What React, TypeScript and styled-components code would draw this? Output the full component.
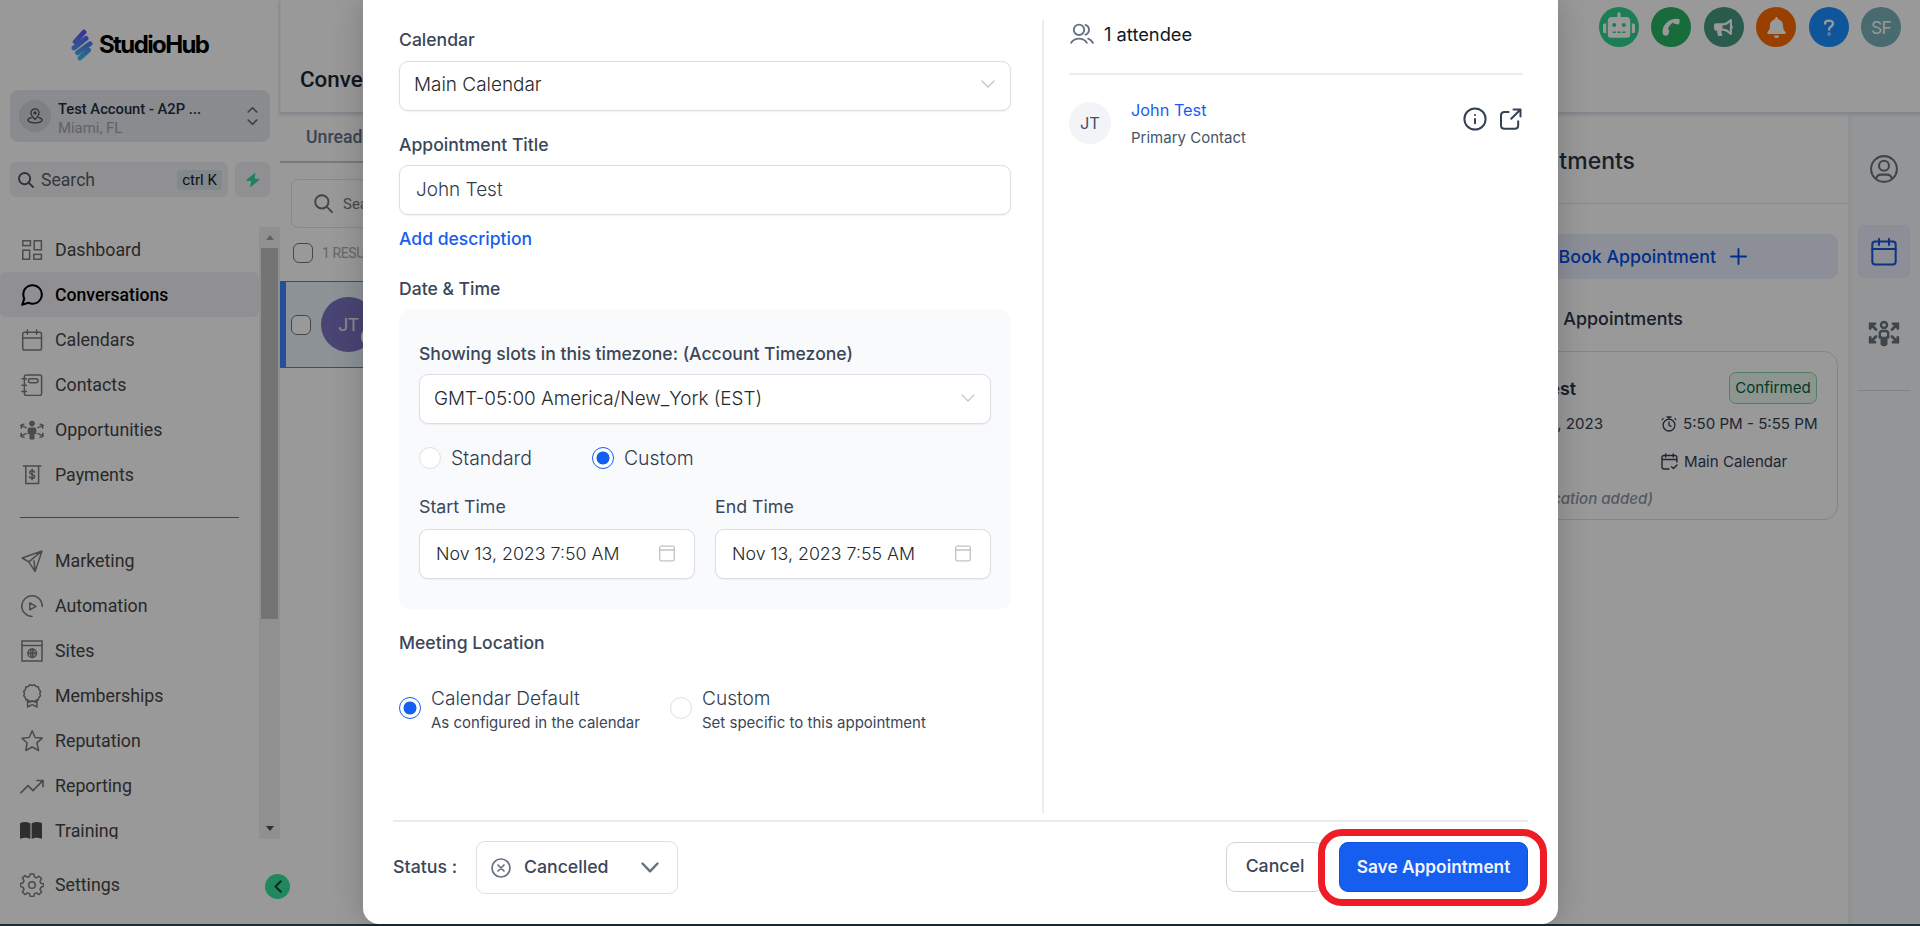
import React from 'react';
import styled, { createGlobalStyle, css } from 'styled-components';
import { FaRobot, FaBell, FaBullhorn } from 'react-icons/fa';
import { FaBookOpen } from 'react-icons/fa6';

const GlobalStyle = createGlobalStyle`
  *, *::before, *::after { box-sizing: border-box; }
  html, body { margin: 0; padding: 0; }
  body { width: 1920px; height: 926px; overflow: hidden; background: #fff; font-family: Inter, "Liberation Sans", sans-serif; }
`;

/* ---------- icons ---------- */

type IconProps = {
  w?: number;
  h?: number;
  box?: string;
  stroke?: string;
  sw?: number;
  children: React.ReactNode;
};

const IconSvg = styled.svg`
  flex: none;
  display: block;
`;

const Icon = ({ w = 22, h, box = '0 0 22 22', stroke = 'currentColor', sw = 1.5, children }: IconProps) => (
  <IconSvg
    width={w}
    height={h ?? w}
    viewBox={box}
    fill="none"
    stroke={stroke}
    strokeWidth={sw}
    strokeLinecap="round"
    strokeLinejoin="round"
  >
    {children}
  </IconSvg>
);

const DashboardIcon = () => (
  <Icon>
    <g strokeLinejoin="miter">
      <rect x="1.8" y="1.8" width="7.600" height="4.800" />
      <rect x="13.200" y="1.800" width="7.200" height="9" />
      <rect x="1.800" y="11.200" width="6.800" height="9" />
      <rect x="12.800" y="15.400" width="7.600" height="4.800" />
    </g>
  </Icon>
);
const ChatIcon = () => (
  <Icon box="1.9 1.9 20.2 20.2" sw={1.9}>
    <path d="M21 11.5a8.38 8.38 0 0 1-.9 3.8 8.5 8.5 0 0 1-7.6 4.7 8.38 8.38 0 0 1-3.8-.9L3 21l1.9-5.7a8.38 8.38 0 0 1-.9-3.8 8.5 8.5 0 0 1 4.7-7.6 8.38 8.38 0 0 1 3.8-.9h.5a8.48 8.48 0 0 1 8 8v.5z" />
  </Icon>
);
const CalendarIcon = () => (
  <Icon>
    <rect x="1.700" y="3.200" width="18.800" height="17.800" rx="1.800" />
    <path d="M1.700 9h18.800M6.400 0.900v4.400M15.600 0.900v4.400" />
  </Icon>
);
const ContactsIcon = () => (
  <Icon>
    <rect x="3.400" y="1" width="17.200" height="20.400" rx="1.800" />
    <rect x="7.400" y="4.800" width="9.600" height="4" rx="2" />
    <path d="M1 4.800h4.400M1 11.200h4.400M1 17.600h4.400" />
  </Icon>
);
const OpportunitiesIcon = () => (
  <Icon w={24} h={22} box="-1 0 24 22">
    <circle cx="11" cy="4.600" r="2.800" fill="currentColor" stroke="none" />
    <path d="M8.300 8.400h5.400a1.600 1.600 0 0 1 1.600 1.600v5h-1.800v4.400a1 1 0 0 1-1 1h-3a1 1 0 0 1-1-1V15H6.700v-5a1.600 1.600 0 0 1 1.600-1.600z" fill="currentColor" stroke="none" />
    <path d="M5 8.600L0 6.600M.4 9.200L0 6.200 2.800 5.200M17 8.600l5-2M21.600 9.200l.4-3-2.800-1M5 14.600L0 17M.2 14.200L0 17.400 3 18.400M17 14.600l5 2.400M21.800 14.200l.2 3.200-3 1" />
  </Icon>
);
const PaymentsIcon = () => (
  <Icon>
    <path d="M2.600 1.900h17M4.800 1.900v17.700h12.800V1.900" strokeLinecap="square" strokeLinejoin="miter" />
    <path d="M13.600 8.200c-.3-1-1.200-1.500-2.500-1.500-1.400 0-2.400.7-2.400 1.900 0 2.600 4.900 1.300 4.900 3.900 0 1.200-1 1.900-2.500 1.900-1.400 0-2.300-.6-2.600-1.600M11.100 5.200v10.600" />
  </Icon>
);
const MarketingIcon = () => (
  <Icon>
    <path d="M21 1L1.200 8l6.600 3.900L14 21.400 21 1zM21 1L7.800 11.900M14 21.400l-1-10.600" />
  </Icon>
);
const AutomationIcon = () => (
  <Icon>
    <path d="M21.300 11.500A10.300 10.300 0 1 0 11 21.400" />
    <path d="M8.800 7.800v7l6.200-3.500z" />
  </Icon>
);
const SitesIcon = () => (
  <Icon>
    <g strokeLinejoin="miter">
      <rect x="1" y="1" width="20" height="20" />
      <path d="M1 5.400h20" />
      <circle cx="11.200" cy="13.200" r="4.300" />
      <path d="M11.200 8.900v8.600M6.900 13.200h8.600" />
      <ellipse cx="11.200" cy="13.200" rx="2" ry="4.300" strokeWidth="1" />
    </g>
  </Icon>
);
const BadgeIcon = () => (
  <Icon h={24} box="0 -1 22 24">
    <path d="M11.200.5l2.400-.7 1.600 1.800 2.300.5.400 2.400 1.700 1.800-.8 2.200.7 2.300-1.700 1.700-.5 2.300-2.400.4-1.700 1.600-2-.8-2.200.8-1.700-1.600-2.400-.4-.5-2.300-1.700-1.700.8-2.300-.8-2.200 1.800-1.800.3-2.400 2.400-.5L8.900-.2z" />
    <path d="M6.600 15v7l4.600-2.400 4.800 2.400v-7M6.600 17.500l4.600-1.500 4.800 1.500" />
  </Icon>
);
const StarIcon = () => (
  <Icon>
    <path d="M11.200.8l2.900 6.700 7.100.6-5.300 4.800 1.700 7.600-6.400-3.500-6.400 3.500 1.300-7.500L1 8.200l7.200-.7z" />
  </Icon>
);
const TrendIcon = () => (
  <Icon w={24} h={22} box="-1 0 24 22" sw={1.7}>
    <path d="M0 17.600l7-7 5 5L21.500 5.800M16 5.500h6v6" strokeLinejoin="miter" />
  </Icon>
);
const GearIcon = () => (
  <Icon w={24} box="0 0 24 24">
    <circle cx="12" cy="12" r="3.300" />
    <path d="M10.200 1h3.600l.7 3 1.900.8 2.700-1.600 2.500 2.500-1.600 2.700.8 1.900 3 .7v2l-3 1.500-.8 1.900 1.600 2.600-2.500 2.500-2.700-1.600-1.900.8-.7 2.700h-3.600l-.7-2.700-1.900-.8-2.700 1.600-2.500-2.500 1.600-2.700-.8-1.900-2.700-.8v-3.100l2.700-.8.800-1.900-1.600-2.700 2.500-2.500 2.700 1.600 1.900-.8z" />
  </Icon>
);
const SearchIcon = ({ size, sw }: { size: number; sw: number }) => (
  <Icon w={size} box="0 0 16 16" sw={sw}>
    <circle cx="6.600" cy="6.600" r="5.600" />
    <path d="M10.800 10.800L15.200 15.200" />
  </Icon>
);
const ChevronDown = ({ w, sw }: { w: number; sw: number }) => (
  <Icon w={w} h={w / 2 + 1} box="0 0 14 8" sw={sw}>
    <path d="M1 1l6 6 6-6" />
  </Icon>
);
const DateIcon = () => (
  <Icon w={16} h={17} box="0 0 16 17" sw={1.3}>
    <rect x=".7" y="1.200" width="14.600" height="14.600" rx="1.500" />
    <path d="M.7 5h14.600" />
  </Icon>
);

/* ---------- page shell ---------- */

const Page = styled.div`
  width: 1920px;
  height: 926px;
  display: flex;
  position: relative;
  overflow: hidden;
`;

const Sidebar = styled.aside`
  width: 280px;
  height: 924px;
  flex: none;
  display: flex;
  flex-direction: column;
  font-family: Roboto, "Liberation Sans", sans-serif;
  position: relative;
`;

const Logo = styled.div`
  display: flex;
  align-items: center;
  height: 32px;
  margin: 29px 0 0 71px;
  gap: 6px;
  font: 700 24px/32px Inter, sans-serif;
  letter-spacing: -1.6px;
  color: #000;
`;
const LogoMark = styled.svg`
  flex: none;
`;

const Account = styled.div`
  display: flex;
  align-items: center;
  margin: 29px 10px 0;
  height: 52px;
  padding: 0 12px 0 9px;
  border-radius: 8px;
  background: #e4e8ed;
`;
const AccountPin = styled.div`
  width: 32px;
  height: 32px;
  border-radius: 50%;
  background: #d2d5d8;
  display: flex;
  align-items: center;
  justify-content: center;
  color: #4c4f55;
`;
const AccountText = styled.div`
  flex: 1;
  padding: 5px 0 0 7px;
  font-size: 14.9px;
  line-height: 19px;
  color: #a1a3aa;
  white-space: nowrap;
  b { display: block; font-weight: 500; font-size: 14.75px; color: #26303f; }
`;

const SearchRow = styled.div`
  display: flex;
  gap: 7px;
  height: 35px;
  margin: 20px 10px 0;
`;
const QuickSearch = styled.div`
  width: 218px;
  display: flex;
  align-items: center;
  border-radius: 6px;
  background: #f1f1f4;
  padding: 0 6px 0 8px;
  font-size: 17.6px;
  color: #5a5d63;
  svg { color: #4f5560; }
  span { flex: 1; padding-left: 7px; }
  kbd {
    font: 400 15px/20px Roboto, sans-serif;
    width: 45px;
    text-align: center;
    border-radius: 3px;
    background: #dae3e7;
    color: #14181d;
  }
`;
const Bolt = styled.div`
  width: 35px;
  display: flex;
  align-items: center;
  justify-content: center;
  border-radius: 6px;
  background: #f1f1f4;
`;

const NavArea = styled.div`
  display: flex;
  height: 612px;
  margin-top: 30px;
  overflow: hidden;
`;
const NavList = styled.nav`
  width: 259px;
  flex: none;
`;
const NavItem = styled.div<{ $active?: boolean }>`
  height: 45px;
  display: flex;
  align-items: center;
  font-size: 17.8px;
  font-weight: 400;
  color: #454545;
  border-radius: 6px;
  svg { color: #7d7d7d; }
  ${(p) => p.$active && css`
    background: #f0f1f4;
    color: #000;
    font-size: 17.6px;
    font-weight: 500;
    svg { color: #000; }
  `}
`;
const NavIcon = styled.span<{ $solid?: boolean }>`
  width: 55px;
  padding-right: ${(p) => (p.$solid ? 13 : 11)}px;
  padding-left: 20px;
  display: flex;
  justify-content: center;
  ${(p) => p.$solid && css`svg { color: #4e4e4e; }`}
`;
const NavDivider = styled.div`
  height: 1px;
  margin: 20px;
  background: #6d7280;
`;
const Scrollbar = styled.div`
  width: 21px;
  display: flex;
  flex-direction: column;
  align-items: center;
  justify-content: space-between;
  background: #f1f1f1;
`;
const ScrollArrow = styled.div<{ $down?: boolean }>`
  height: 21px;
  display: flex;
  align-items: center;
  &::before {
    content: '';
    border: 4.5px solid transparent;
    border-top-width: ${(p) => (p.$down ? 5 : 0)}px;
    border-bottom-width: ${(p) => (p.$down ? 0 : 5)}px;
    border-top-color: ${(p) => (p.$down ? '#505050' : 'transparent')};
    border-bottom-color: ${(p) => (p.$down ? 'transparent' : '#a3a3a3')};
  }
`;
const Thumb = styled.div`
  width: 17px;
  height: 371px;
  margin-bottom: auto;
  background: #c1c1c1;
`;
const SettingsRow = styled(NavItem)`
  margin-top: 23px;
`;
const Collapse = styled.div`
  position: absolute;
  left: 265px;
  top: 874px;
  width: 25px;
  height: 25px;
  border-radius: 50%;
  background: #35e39f;
  display: flex;
  align-items: center;
  justify-content: center;
  z-index: 2;
  color: #0e4a36;
`;

const Main = styled.main`
  flex: 1;
  height: 924px;
  display: flex;
  flex-direction: column;
`;
const TopBar = styled.header`
  height: 112px;
  flex: none;
  display: flex;
  justify-content: space-between;
  padding: 0 19px;
  border-left: 1px solid #f1f3f6;
  box-shadow: 0 2px 3px 1px #d9dfe6;
  z-index: 1;
`;
const PageTitle = styled.h1`
  margin: 64px 0 0;
  font: 500 22.4px/30px Roboto, sans-serif;
  color: #1b2636;
`;
const TopActions = styled.div`
  display: flex;
  gap: 12.4px;
  padding-top: 7px;
`;
const RoundAction = styled.div<{ $bg: string; $lift?: number }>`
  width: 40px;
  height: 40px;
  border-radius: 50%;
  background: ${(p) => p.$bg};
  color: #fff;
  display: flex;
  align-items: center;
  justify-content: center;
  padding-bottom: ${(p) => p.$lift ?? 0}px;
  font: 400 17.5px Inter, sans-serif;
  letter-spacing: -0.8px;
`;
const Body = styled.div`
  flex: 1;
  display: flex;
  justify-content: space-between;
`;

/* ---------- conversation list ---------- */

const Inbox = styled.section`
  width: 420px;
  font-family: Roboto, "Liberation Sans", sans-serif;
`;
const InboxTab = styled.div`
  height: 51px;
  padding: 0 26px;
  border-bottom: 2px solid #c6cad6;
  font: 500 17.7px/51px Roboto, sans-serif;
  color: #65728a;
`;
const InboxSearch = styled.div`
  margin: 16px 11px 0;
  height: 49px;
  display: flex;
  align-items: center;
  gap: 10px;
  padding-left: 22px;
  border: 1.5px solid #dfe1e6;
  border-radius: 7px;
  font-size: 15px;
  color: #747980;
  svg { color: #68757d; }
`;
const ResultRow = styled.div`
  height: 53px;
  display: flex;
  align-items: center;
  gap: 9px;
  padding: 0 13px 3px;
  font-size: 14px;
  letter-spacing: -0.4px;
  color: #a9adb5;
`;
const CheckBox = styled.span`
  width: 20px;
  height: 20px;
  flex: none;
  border: 1.3px solid #70757e;
  border-radius: 6px;
  background: #fff;
`;
const Conversation = styled.div`
  height: 87px;
  display: flex;
  align-items: center;
  gap: 10px;
  padding-left: 5px;
  border: 1px solid #3f86ff;
  border-left: 6px solid #3f86ff;
  background: #e9f3fb;
`;
const Initials = styled.div`
  width: 55px;
  height: 55px;
  border-radius: 50%;
  background: #7974c2;
  color: #e8e8ef;
  font-size: 18px;
  line-height: 56px;
  text-align: center;
  position: relative;
  &::after {
    content: '';
    position: absolute;
    left: 40px;
    top: 29px;
    width: 22px;
    height: 22px;
    border-radius: 50%;
    background: #fff;
  }
`;

/* ---------- appointments panel ---------- */

const RightSide = styled.div`
  display: flex;
`;
const Panel = styled.section`
  width: 420px;
  color: #344054;
`;
const PanelTitle = styled.h2`
  margin: 0;
  height: 92px;
  padding: 4px 213px 0 0;
  text-align: right;
  font: 500 23px/90px Inter, sans-serif;
  color: #2a3446;
  border-bottom: 1px solid #e4e6e9;
`;
const BookButton = styled.div`
  margin: 30px 10px 0 20px;
  height: 45px;
  padding-right: 91px;
  display: flex;
  align-items: center;
  justify-content: flex-end;
  gap: 14px;
  border-radius: 9px;
  background: #eaeefc;
  color: #004eeb;
  font-size: 17.8px;
  font-weight: 500;
`;
const SectionTitle = styled.h3`
  margin: 0;
  padding-right: 165px;
  text-align: right;
  height: 72px;
  font: 500 17.9px/80px Inter, sans-serif;
  color: #2a3446;
`;
const Card = styled.div`
  margin: 0 10px 0 20px;
  height: 169px;
  padding: 19px 20px 0;
  border: 1px solid #dcdee1;
  border-radius: 14px;
  font-size: 15.1px;
`;
const CardRow = styled.div<{ $h: number }>`
  height: ${(p) => p.$h}px;
  display: flex;
  align-items: center;
  justify-content: flex-end;
  > :first-child { flex: 1; text-align: right; }
`;
const CardName = styled.span`
  font: 600 17.7px Inter, sans-serif;
  padding-right: 153px;
  color: #2a3446;
`;
const Confirmed = styled.span`
  width: 88px;
  height: 32px;
  border: 1px solid #88d6a8;
  border-radius: 7px;
  background: #ecf8f1;
  color: #05603a;
  line-height: 29px;
  text-align: center;
  font-size: 15.1px;
`;
const CardMeta = styled.span`
  width: 156px;
  display: flex;
  align-items: center;
  gap: 6px;
  white-space: nowrap;
`;
const CardDate = styled.span`
  padding-right: 58px;
`;
const CardNote = styled.div`
  font-style: italic;
  font-size: 15.1px;
  font-weight: 500;
  color: #8f95a3;
  text-align: right;
  padding-right: 164px;
  line-height: 36px;
`;
const Rail = styled.aside`
  width: 72px;
  display: flex;
  flex-direction: column;
  align-items: center;
  background: #f7f9fc;
  box-shadow: inset 3px 2px 5px #edeff1;
  color: #68757d;
  padding-top: 43px;
`;
const RailActive = styled.div`
  width: 52px;
  height: 53px;
  margin: 42px 0 41px;
  border-radius: 6px;
  background: #e9eefc;
  color: #1a55dc;
  display: flex;
  align-items: center;
  justify-content: center;
`;
const RailLine = styled.div`
  width: 52px;
  height: 1px;
  margin-top: 43px;
  background: #d8dbe0;
`;

/* ---------- modal ---------- */

const Overlay = styled.div`
  position: absolute;
  inset: 0;
  z-index: 10;
  padding-left: 363px;
  background: rgba(0, 0, 0, 0.4);
  border-bottom: 2px solid #1d2b33;
`;
const Modal = styled.div`
  width: 1195px;
  height: 924px;
  display: flex;
  flex-direction: column;
  background: #fff;
  border-radius: 0 0 16px 16px;
  box-shadow: 0 0 32px rgba(0, 0, 0, 0.2);
  color: #3b4659;
`;
const Columns = styled.div`
  height: 793px;
  margin-top: 20px;
  display: flex;
`;
const FormColumn = styled.div`
  width: 681px;
  padding: 0 31px 0 36px;
  border-right: 2px solid #eaecf3;
`;
const Attendees = styled.div`
  width: 480px;
  padding-left: 25px;
`;
const Label = styled.div<{ $h: number; $line?: number; $top?: number; $regular?: boolean }>`
  height: ${(p) => p.$h}px;
  padding-top: ${(p) => p.$top ?? 0}px;
  line-height: ${(p) => p.$line ?? 40}px;
  font-size: ${(p) => (p.$regular ? 17.8 : 17.57)}px;
  font-weight: ${(p) => (p.$regular ? 400 : 500)};
  white-space: nowrap;
`;
const Field = styled.div<{ $pad?: number; $size?: number; $ink?: string; $drop?: number }>`
  height: 50px;
  flex: 1;
  display: flex;
  align-items: center;
  justify-content: space-between;
  padding: 0 15px ${(p) => p.$drop ?? 2}px ${(p) => p.$pad ?? 14}px;
  border: 1px solid #dcdee5;
  border-radius: 9px;
  background: #fff;
  box-shadow: 0 1px 2px rgba(16, 24, 40, 0.06);
  font-size: ${(p) => p.$size ?? 18.95}px;
  font-weight: 300;
  color: ${(p) => p.$ink ?? '#26292c'};
  white-space: nowrap;
  svg { color: #c2c4c9; }
`;
const LinkText = styled.a`
  display: block;
  height: 48px;
  line-height: 48px;
  font-size: 17.55px;
  font-weight: 500;
  color: #155eef;
`;
const TimePanel = styled.div`
  height: 299px;
  padding: 22px 20px 0;
  border-radius: 10px;
  background: #f9fafc;
`;
const Radios = styled.div`
  display: flex;
  height: 68px;
  margin-bottom: 1px;
  align-items: center;
`;
const Radio = styled.span<{ $on?: boolean }>`
  width: 22px;
  height: 22px;
  flex: none;
  border-radius: 50%;
  background: #fff;
  border: 1px solid #e0e0e6;
  ${(p) => p.$on && css`
    border: 1.5px solid #155eef;
    background: radial-gradient(circle, #155eef 0 6.2px, #fff 6.8px);
  `}
`;
const RadioText = styled.span<{ $w: number }>`
  width: ${(p) => p.$w}px;
  padding-left: 10px;
  font-size: 19.4px;
  font-weight: 300;
  color: #303b4e;
`;
const TwoColumns = styled.div`
  display: flex;
  gap: 20px;
  > div { flex: 1; }
`;
const DateIconSlot = styled.span`
  padding-right: 4px;
`;
const LocationOptions = styled.div`
  display: flex;
  align-items: center;
  height: 60px;
`;
const LocationText = styled.div<{ $w: number }>`
  width: ${(p) => p.$w}px;
  padding: 1px 0 0 10px;
  font-size: 15px;
  line-height: 22px;
  white-space: nowrap;
  strong { display: block; font-weight: 300; font-size: 19.1px; line-height: 28px; color: #303b4e; }
`;
const AttendeeHeader = styled.div`
  height: 55px;
  width: 454px;
  display: flex;
  gap: 10px;
  padding: 2px 0 0 1px;
  border-bottom: 2px solid #eaecf0;
  font-size: 18.3px;
  line-height: 24px;
  color: #101828;
`;
const AttendeeRow = styled.div`
  width: 454px;
  margin-top: 24px;
  display: flex;
  align-items: center;
  height: 48px;
  color: #475467;
`;
const AttendeeAvatar = styled.div`
  width: 42px;
  height: 42px;
  border-radius: 50%;
  background: #f2f4f8;
  text-align: center;
  line-height: 43px;
  font-size: 16.5px;
`;
const AttendeeText = styled.div`
  flex: 1;
  padding: 2px 0 0 20px;
  font-size: 15px;
  line-height: 27px;
  a { display: block; font-size: 16.3px; color: #155eef; }
`;
const AttendeeActions = styled.div`
  display: flex;
  gap: 12px;
  padding: 0 1px 8px 0;
  color: #344054;
`;
const Footer = styled.footer`
  margin: 7px 30px 0;
  height: 104px;
  border-top: 2px solid #eaecf3;
  display: flex;
  align-items: center;
  font-size: 17.7px;
  font-weight: 500;
  padding-bottom: 13px;
`;
const StatusLabel = styled.span`
  width: 83px;
  font-size: 17.8px;
`;
const StatusSelect = styled.div`
  width: 202px;
  height: 53px;
  margin-top: 2px;
  padding: 0 18px 0 14px;
  display: flex;
  align-items: center;
  border: 1px solid #dfe0e4;
  border-radius: 9px;
  span { flex: 1; padding: 0 0 2px 13px; }
`;
const CancelButton = styled.button`
  width: 98px;
  height: 50px;
  margin-left: auto;
  border: 1px solid #d0d5dd;
  border-radius: 9px;
  background: #fff;
  font: 500 17.7px Inter, sans-serif;
  color: #3b4659;
  padding: 0 0 2px;
`;
const SaveButton = styled.button`
  width: 189px;
  height: 50px;
  margin-left: 15px;
  border: 1px solid #0b50e0;
  border-radius: 9px;
  background: #155eef;
  font: 600 17.3px Inter, sans-serif;
  color: #f2f5ff;
  padding: 0 0 1px;
  position: relative;
`;
const Highlight = styled.span`
  position: absolute;
  left: -22px;
  top: -14px;
  width: 229px;
  height: 77px;
  border: 7px solid #ee1c25;
  border-radius: 24px;
`;

const primaryNav: [string, React.ReactNode, boolean?][] = [
  ['Dashboard', <DashboardIcon />],
  ['Conversations', <ChatIcon />, true],
  ['Calendars', <CalendarIcon />],
  ['Contacts', <ContactsIcon />],
  ['Opportunities', <OpportunitiesIcon />],
  ['Payments', <PaymentsIcon />],
];
const secondaryNav: [string, React.ReactNode][] = [
  ['Marketing', <MarketingIcon />],
  ['Automation', <AutomationIcon />],
  ['Sites', <SitesIcon />],
  ['Memberships', <BadgeIcon />],
  ['Reputation', <StarIcon />],
  ['Reporting', <TrendIcon />],
];

export default function App() {
  return (
    <Page>
      <GlobalStyle />
      <Sidebar>
        <Logo>
          <LogoMark width="22" height="32" viewBox="0 0 22 32">
            <defs>
              <linearGradient id="brand" gradientUnits="userSpaceOnUse" x1="12" y1="0" x2="9" y2="32">
                <stop offset="0" stopColor="#6b4df5" />
                <stop offset="0.5" stopColor="#5286f2" />
                <stop offset="1" stopColor="#40c4f0" />
              </linearGradient>
            </defs>
            <g stroke="url(#brand)" strokeWidth="4.900" strokeLinecap="round" fill="none">
              <path d="M4.200 12.800L13 3.200" />
              <path d="M3 19L15 9.400" />
              <path d="M6.600 23.800L19 14.800" />
              <path d="M9 29L17.500 21.200" />
            </g>
          </LogoMark>
          <span>StudioHub</span>
        </Logo>
        <Account>
          <AccountPin>
            <Icon w={16} box="0 0 16 16" sw={1.3}>
              <path d="M8 11.200C5 8.400 4 6.900 4 4.900a4 4 0 0 1 8 0c0 2-1 3.500-4 6.300z" />
              <circle cx="8" cy="4.900" r="1" fill="currentColor" />
              <path d="M4.200 9.700C2.300 10.200 1 11 1 12.100c0 1.600 3.100 2.700 7 2.700s7-1.100 7-2.700c0-1.100-1.300-1.900-3.200-2.400" />
            </Icon>
          </AccountPin>
          <AccountText>
            <b>Test Account - A2P ...</b>
            Miami, FL
          </AccountText>
          <Icon w={11} h={20} box="0 0 11 20" stroke="#60646c" sw={1.6}>
            <path d="M1.200 6L5.500 1.800 9.800 6M1.200 14l4.300 4.200L9.800 14" />
          </Icon>
        </Account>
        <SearchRow>
          <QuickSearch>
            <SearchIcon size={16} sw={1.9} />
            <span>Search</span>
            <kbd>ctrl K</kbd>
          </QuickSearch>
          <Bolt>
            <svg width="14" height="16" viewBox="0 0 14 16">
              <path d="M9.500.5L.8 7.600q-.9 1.200.5 1.500h3.900L4.100 15.500 13 8.200q.8-1.100-.5-1.400H8.600z" fill="#35d99b" />
            </svg>
          </Bolt>
        </SearchRow>
        <NavArea>
          <NavList>
            {primaryNav.map(([name, icon, active]) => (
              <NavItem key={name} $active={active}>
                <NavIcon>{icon}</NavIcon>
                {name}
              </NavItem>
            ))}
            <NavDivider />
            {secondaryNav.map(([name, icon]) => (
              <NavItem key={name}>
                <NavIcon>{icon}</NavIcon>
                {name}
              </NavItem>
            ))}
            <NavItem>
              <NavIcon $solid><FaBookOpen size={23} /></NavIcon>
              Training
            </NavItem>
          </NavList>
          <Scrollbar>
            <ScrollArrow />
            <Thumb />
            <ScrollArrow $down />
          </Scrollbar>
        </NavArea>
        <SettingsRow>
          <NavIcon><GearIcon /></NavIcon>
          Settings
        </SettingsRow>
        <Collapse>
          <Icon w={8} h={13} box="0 0 8 13" sw={2}><path d="M6.800 1.200L1.500 6.500l5.300 5.300" /></Icon>
        </Collapse>
      </Sidebar>

      <Main>
        <TopBar>
          <PageTitle>Conversations</PageTitle>
          <TopActions>
            <RoundAction $bg="#30d28d" $lift={4}><FaRobot size={32} /></RoundAction>
            <RoundAction $bg="#28b463">
              <svg width="20" height="20" viewBox="0 0 20 20" fill="#fff">
                <path d="M1.600 15.800C1 8.500 7 2 14.800 1.700l3.100.3q1 .3.900 1.300l-.5 3.200q-.3 1-1.300.9l-3.800-.6-1.300-1.400C9.500 7.200 7.700 9.300 7 12l1.300 1.400-.9 3.800-.9 1.200-3.200.2q-1.300-.3-1.700-2.800z" />
              </svg>
            </RoundAction>
            <RoundAction $bg="#479a83"><FaBullhorn size={19} /></RoundAction>
            <RoundAction $bg="#ff6a00"><FaBell size={21} /></RoundAction>
            <RoundAction $bg="#188eff">
              <Icon w={12} h={17} box="0 0 12 17" sw={2.4}>
                <path d="M2 4.600C2 2.600 3.700 1.600 6 1.600s4 1.200 4 3.200c0 2.800-3.900 2.700-3.900 5.700" />
                <circle cx="6.100" cy="14.900" r=".4" />
              </Icon>
            </RoundAction>
            <RoundAction $bg="#7bb1b9">SF</RoundAction>
          </TopActions>
        </TopBar>
        <Body>
          <Inbox>
            <InboxTab>Unread</InboxTab>
            <InboxSearch>
              <SearchIcon size={19} sw={1.6} />
              Search
            </InboxSearch>
            <ResultRow>
              <CheckBox />
              1 RESULT
            </ResultRow>
            <Conversation>
              <CheckBox />
              <Initials>JT</Initials>
            </Conversation>
          </Inbox>
          <RightSide>
            <Panel>
              <PanelTitle>Appointments</PanelTitle>
              <BookButton>
                Book Appointment
                <Icon w={17} box="0 0 17 17" sw={1.9}><path d="M1 8.500h15M8.500 1v15" /></Icon>
              </BookButton>
              <SectionTitle>Upcoming Appointments</SectionTitle>
              <Card>
                <CardRow $h={34}>
                  <CardName>John Test</CardName>
                  <Confirmed>Confirmed</Confirmed>
                </CardRow>
                <CardRow $h={37}>
                  <CardDate>Nov 13, 2023</CardDate>
                  <CardMeta>
                    <Icon w={16} box="0 0 16 16" sw={1.3}>
                      <circle cx="8" cy="9.100" r="5.900" />
                      <path d="M8 6v3.200l2 1.200M6 1h4M8 1v2M2 2.600L1.200 3.600M14 2.600l.8 1" />
                    </Icon>
                    5:50 PM - 5:55 PM
                  </CardMeta>
                </CardRow>
                <CardRow $h={39}>
                  <span />
                  <CardMeta>
                    <Icon w={17} box="0 0 17 17" sw={1.4}>
                      <path d="M8 16H3.200Q1 16 1 14V4.500q0-2 2.200-2h10.500q2.200 0 2.200 2V9M1 6.500h15M4.700 1v3M12.200 1v3M10.500 13.800l2 1.800 3.500-3.700" />
                    </Icon>
                    Main Calendar
                  </CardMeta>
                </CardRow>
                <CardNote>(No location added)</CardNote>
              </Card>
            </Panel>
            <Rail>
              <Icon w={28} box="0 0 28 28" sw={2.1}>
                <circle cx="14" cy="14" r="12.900" />
                <circle cx="14" cy="10.800" r="5" />
                <path d="M6 23.800c.8-3 2.400-4.200 5-4.200h6c2.600 0 4.200 1.200 5 4.200" />
              </Icon>
              <RailActive>
                <Icon w={26} h={28} box="0 0 26 28" sw={2}>
                  <rect x="1.300" y="3.500" width="23.400" height="23" rx="3" />
                  <path d="M1.300 11h23.400M8 1v6M18 1v6" />
                </Icon>
              </RailActive>
              <Icon w={32} h={28} box="0 0 32 28" sw={2.4}>
                <circle cx="16" cy="6" r="3" />
                <path d="M13.500 12h5l1.700 1.500v5h-1.900V25q-2.300 2-4.600 0v-6.500h-1.900v-5zM16 19v5" />
                <g strokeLinejoin="miter" strokeWidth="2.800">
                  <path d="M8 10.500L3 5.500M2.200 9.500V4.800H7M24 10.500l5-5M29.800 9.500V4.800H25M8 17.500l-5 5M2.200 18.500v4.700H7M24 17.500l5 5M29.800 18.500v4.700H25" />
                </g>
              </Icon>
              <RailLine />
            </Rail>
          </RightSide>
        </Body>
      </Main>

      <Overlay>
        <Modal>
          <Columns>
            <FormColumn>
              <Label $h={41}>Calendar</Label>
              <Field $drop={4}>Main Calendar<ChevronDown w={14} sw={1.3} /></Field>
              <Label $h={54} $top={14}>Appointment Title</Label>
              <Field $pad={16} $ink="#303b4e">John Test</Field>
              <LinkText>Add description</LinkText>
              <Label $h={47} $top={6}>Date &amp; Time</Label>
              <TimePanel>
                <Label $h={42} $top={2}>Showing slots in this timezone: (Account Timezone)</Label>
                <Field $size={18.9}>GMT-05:00 America/New_York (EST)<ChevronDown w={14} sw={1.3} /></Field>
                <Radios>
                  <Radio />
                  <RadioText $w={151}>Standard</RadioText>
                  <Radio $on />
                  <RadioText $w={110}>Custom</RadioText>
                </Radios>
                <TwoColumns>
                  <div>
                    <Label $h={36} $line={27} $regular>Start Time</Label>
                    <Field $pad={16} $size={17.8}>Nov 13, 2023 7:50 AM<DateIconSlot><DateIcon /></DateIconSlot></Field>
                  </div>
                  <div>
                    <Label $h={36} $line={27} $regular>End Time</Label>
                    <Field $pad={16} $size={17.8}>Nov 13, 2023 7:55 AM<DateIconSlot><DateIcon /></DateIconSlot></Field>
                  </div>
                </TwoColumns>
              </TimePanel>
              <Label $h={69} $line={68}>Meeting Location</Label>
              <LocationOptions>
                <Radio $on />
                <LocationText $w={249}>
                  <strong>Calendar Default</strong>
                  As configured in the calendar
                </LocationText>
                <Radio />
                <LocationText $w={248}>
                  <strong>Custom</strong>
                  Set specific to this appointment
                </LocationText>
              </LocationOptions>
            </FormColumn>
            <Attendees>
              <AttendeeHeader>
                <Icon w={24} box="0 0 24 24" stroke="#667085" sw={1.9}>
                  <circle cx="9" cy="7.800" r="5.200" />
                  <path d="M1.200 20.800C3 17.900 5.800 16.600 9 16.600s6 1.300 7.800 4.200M15.500 2.900a5.200 5.200 0 0 1 0 9.800M18.200 16.700c1.900.7 3.500 2.100 4.600 4.100" />
                </Icon>
                1 attendee
              </AttendeeHeader>
              <AttendeeRow>
                <AttendeeAvatar>JT</AttendeeAvatar>
                <AttendeeText>
                  <a>John Test</a>
                  Primary Contact
                </AttendeeText>
                <AttendeeActions>
                  <Icon w={24} box="0 0 24 24" sw={2}>
                    <circle cx="12" cy="12" r="10.600" />
                    <path d="M12 16.300v-4.300M12 8h.01" />
                  </Icon>
                  <Icon w={23} h={24} box="0 0 23 24" sw={2}>
                    <path d="M9.500 5H5.500Q2 5 2 8.500v9.700q0 3.500 3.500 3.500h10.200q3.500 0 3.500-3.500v-4M14.500 2.500h7v7M21.500 2.500l-9.300 9.300" />
                  </Icon>
                </AttendeeActions>
              </AttendeeRow>
            </Attendees>
          </Columns>
          <Footer>
            <StatusLabel>Status :</StatusLabel>
            <StatusSelect>
              <Icon w={20} box="0 0 20 20" stroke="#667085" sw={1.7}>
                <circle cx="10" cy="10" r="9" />
                <path d="M7 7l6 6M13 7l-6 6" />
              </Icon>
              <span>Cancelled</span>
              <Icon w={18} h={11} box="0 0 18 11" stroke="#667085" sw={2.4}><path d="M1.500 1.500L9 9.300l7.500-7.800" /></Icon>
            </StatusSelect>
            <CancelButton>Cancel</CancelButton>
            <SaveButton>
              Save Appointment
              <Highlight />
            </SaveButton>
          </Footer>
        </Modal>
      </Overlay>
    </Page>
  );
}
